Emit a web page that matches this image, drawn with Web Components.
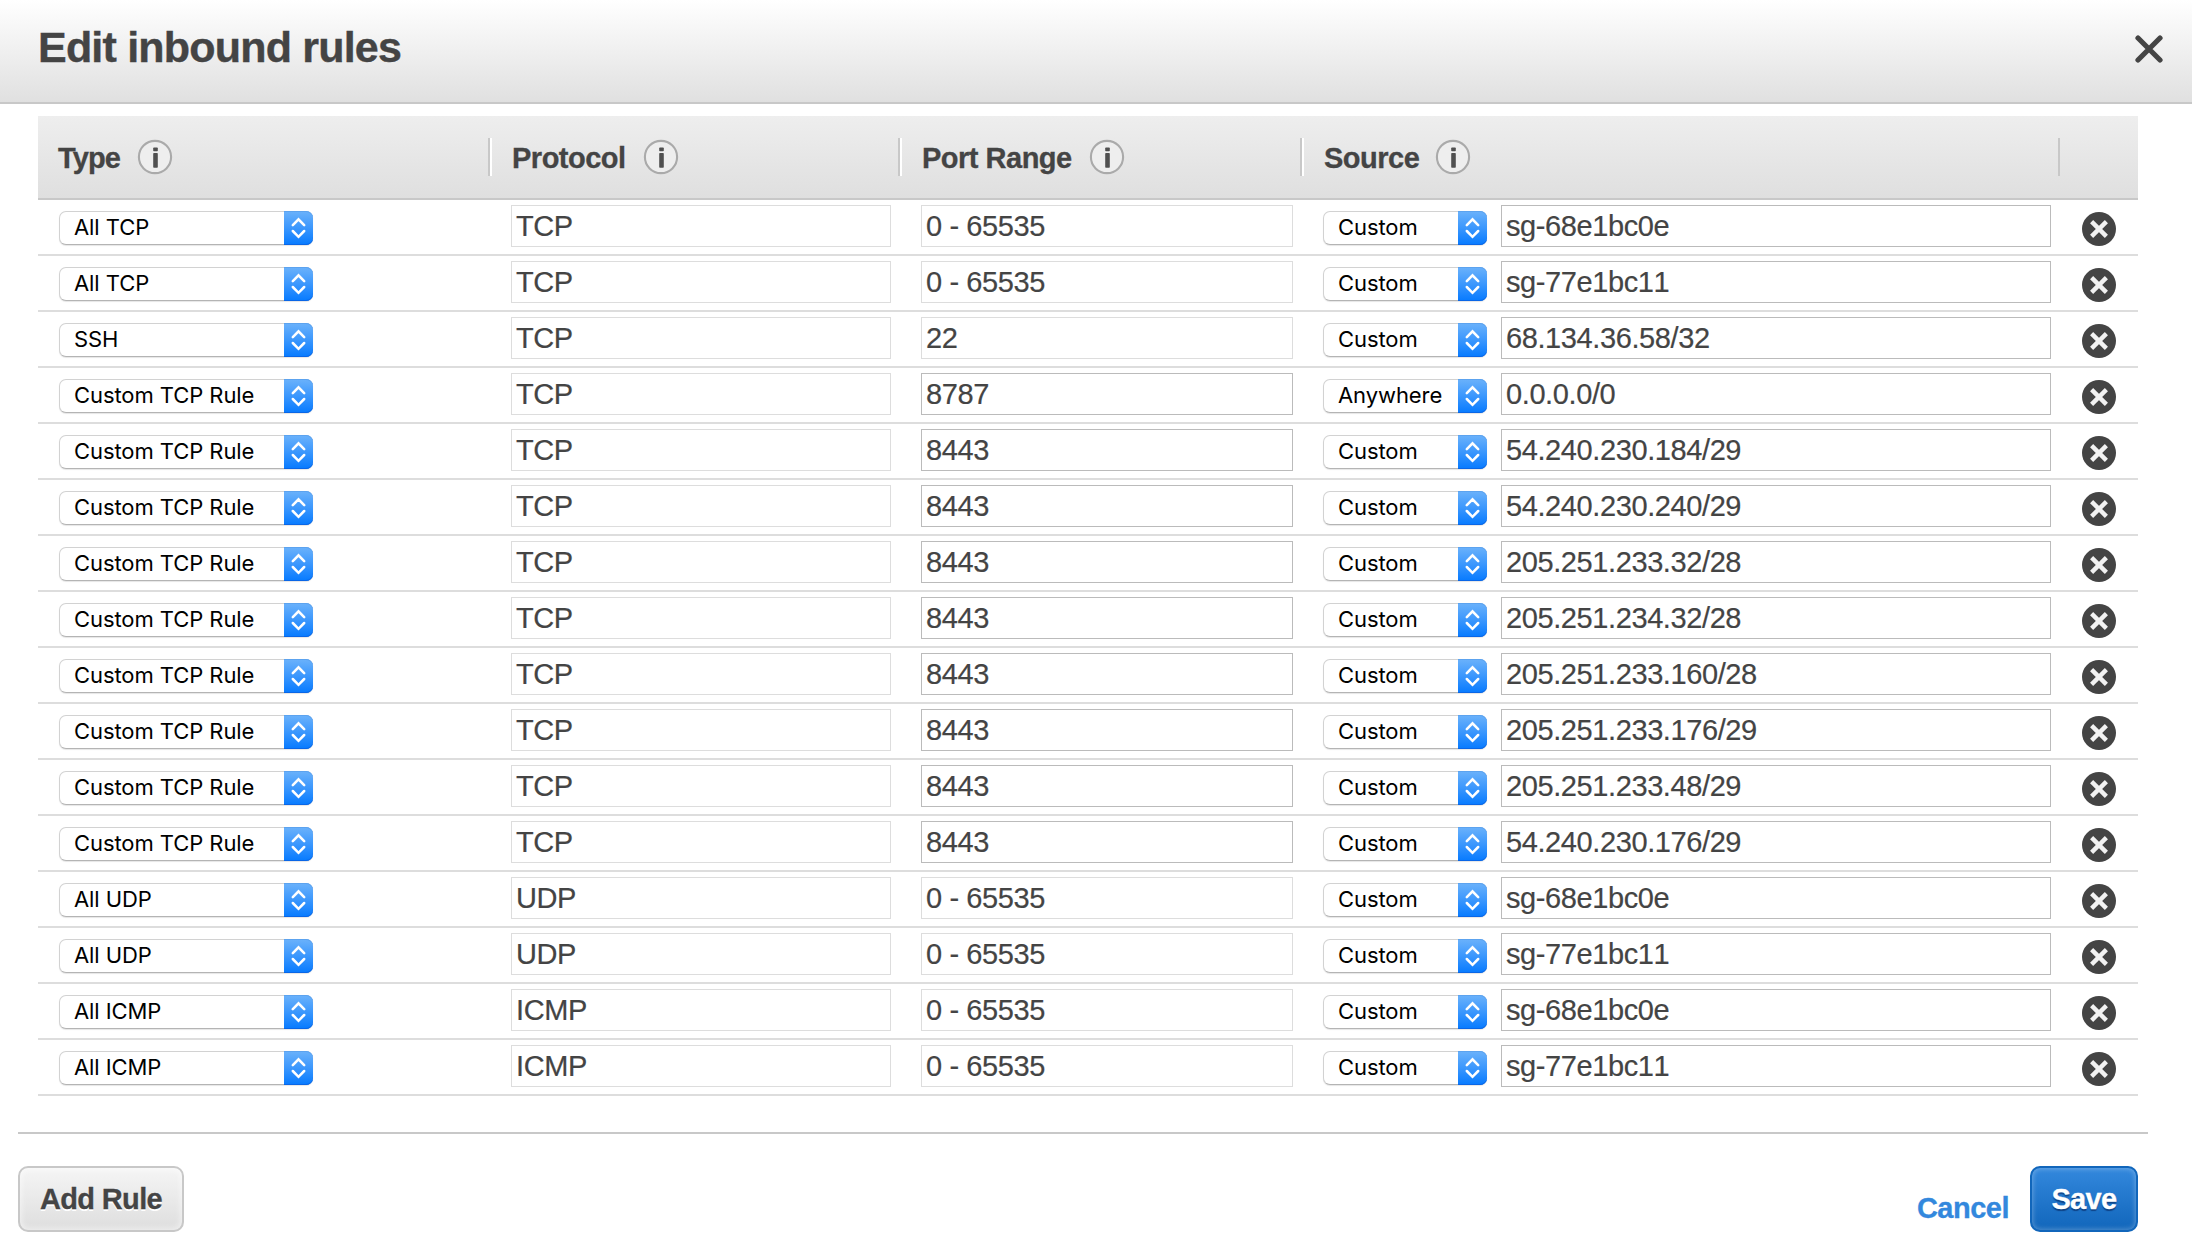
<!DOCTYPE html>
<html lang="en">
<head>
<meta charset="utf-8">
<title>Edit inbound rules</title>
<style>
  html, body { margin: 0; background: #fff; }
  body { font-family: "Liberation Sans", Arial, sans-serif; color: #444; }
</style>
</head>
<body>
<rules-dialog heading="Edit inbound rules"></rules-dialog>

<script>
const define = (name, css, html) => customElements.define(name, class extends HTMLElement {
  constructor() {
    super();
    this.attachShadow({ mode: 'open' }).innerHTML =
      `<style>*{box-sizing:border-box}${css}</style>` + (typeof html === 'function' ? html(this) : html);
  }
});

define('info-icon', `
  :host { display: block; width: 36px; height: 36px; }
  svg { display: block; }`,
  `<svg width="36" height="36" viewBox="0 0 36 36">
    <circle cx="18" cy="18" r="16.1" fill="#eee" stroke="#aaa" stroke-width="2.1"/>
    <rect x="16.2" y="8.4" width="4.6" height="3.8" rx=".8" fill="#505050"/>
    <rect x="16.2" y="14" width="4.6" height="14.8" rx=".8" fill="#505050"/>
  </svg>`);

define('remove-button', `
  :host { display: block; width: 34px; height: 34px; }
  svg { display: block; }`,
  `<svg width="34" height="34" viewBox="0 0 34 34">
    <circle cx="17" cy="17" r="17" fill="#444"/>
    <path d="M9.6 9.6 24.4 24.4M24.4 9.6 9.6 24.4" stroke="#f2f2f2" stroke-width="4.4"/>
  </svg>`);

define('close-button', `
  :host { display: block; width: 28px; height: 28px; }
  svg { display: block; }`,
  `<svg width="28" height="28" viewBox="0 0 28 28">
    <path d="M3 3 25 25M25 3 3 25" stroke="#444" stroke-width="5.2" stroke-linecap="round"/>
  </svg>`);

define('pop-select', `
  :host { display: flex; height: 34px; border-radius: 7px; background: #fff;
    border: 1px solid #d2d2d2; border-bottom-color: #b4b4b4; box-shadow: 0 1px 1px rgba(0,0,0,.1);
    box-sizing: border-box; color: #000; font: 22px/32px Inter, Roboto, sans-serif; letter-spacing: -.08px; }
  span { flex: 1; padding-left: 14px; white-space: nowrap; margin-top: -1px; }
  .cap { width: 29px; margin: -1px; height: 34px; background: linear-gradient(#6bb2fb, #3b97fd 50%, #067aff);
    box-shadow: inset 0 -1px #0a66e6, inset 0 1px #5ca3ef; border-radius: 0 7px 7px 0; }
  svg { display: block; }`,
  `<span><slot></slot></span><div class="cap"><svg width="29" height="34" viewBox="0 0 29 34">
    <path d="M8.8 14.2 14.5 8.4 20.2 14.2M8.8 20 14.5 25.8 20.2 20" fill="none" stroke="#fff" stroke-width="2.5" stroke-linecap="round" stroke-linejoin="miter"/>
  </svg></div>`);

define('text-field', `
  :host { display: block; box-sizing: border-box; height: 42px; padding: 4px 4px; border: 1px solid #ddd;
    font-size: 29px; line-height: 32px; letter-spacing: -.4px; font-kerning: none; white-space: nowrap; background: #fff;
    -webkit-text-stroke: .2px #444; }
  :host([editable]) { border-color: #bbb; }`,
  `<slot></slot>`);

define('column-head', `
  :host { display: flex; align-items: center; height: 82px; padding-left: var(--inset, 22px); box-sizing: border-box;
    font-weight: bold; font-size: 29px; line-height: 32px; letter-spacing: -.5px; -webkit-text-stroke: .3px #444; }
  .label { margin-top: 2px; white-space: nowrap; width: var(--label); }
  .rule { margin-left: auto; width: 2px; height: 38px; background: #c8c8c8; }
  :host([lit]) .rule { box-shadow: 2px 0 #fff; }`,
  `<span class="label"><slot></slot></span><info-icon></info-icon><div class="rule"></div>`);

define('rule-row', `
  :host { display: grid; grid-template-columns: var(--cols); height: 56px; box-sizing: border-box; border-bottom: 2px solid #ddd; }
  div { padding: 5px 0 0 21px; display: flex; align-items: flex-start; }
  pop-select { margin-top: 6px; }
  .type { width: 254px; }
  .proto { width: 380px; }
  .port { width: 372px; }
  .mode { width: 164px; }
  .src { width: 550px; margin-left: 14px; }
  .del { padding: 12px 0 0 22px; }`,
  el => {
    const a = n => el.getAttribute(n);
    return `<div><pop-select class="type">${a('type')}</pop-select></div>
      <div><text-field class="proto">${a('protocol')}</text-field></div>
      <div><text-field class="port" ${a('type') === 'Custom TCP Rule' ? 'editable' : ''}>${a('port')}</text-field></div>
      <div><pop-select class="mode">${a('mode')}</pop-select><text-field class="src" editable>${a('source')}</text-field></div>
      <div class="del"><remove-button></remove-button></div>`;
  });

const C = 'Custom TCP Rule', R = '0 - 65535';
const rules = [
  ['All TCP', 'TCP', R, 'Custom', 'sg-68e1bc0e'],
  ['All TCP', 'TCP', R, 'Custom', 'sg-77e1bc11'],
  ['SSH', 'TCP', '22', 'Custom', '68.134.36.58/32'],
  [C, 'TCP', '8787', 'Anywhere', '0.0.0.0/0'],
  [C, 'TCP', '8443', 'Custom', '54.240.230.184/29'],
  [C, 'TCP', '8443', 'Custom', '54.240.230.240/29'],
  [C, 'TCP', '8443', 'Custom', '205.251.233.32/28'],
  [C, 'TCP', '8443', 'Custom', '205.251.234.32/28'],
  [C, 'TCP', '8443', 'Custom', '205.251.233.160/28'],
  [C, 'TCP', '8443', 'Custom', '205.251.233.176/29'],
  [C, 'TCP', '8443', 'Custom', '205.251.233.48/29'],
  [C, 'TCP', '8443', 'Custom', '54.240.230.176/29'],
  ['All UDP', 'UDP', R, 'Custom', 'sg-68e1bc0e'],
  ['All UDP', 'UDP', R, 'Custom', 'sg-77e1bc11'],
  ['All ICMP', 'ICMP', R, 'Custom', 'sg-68e1bc0e'],
  ['All ICMP', 'ICMP', R, 'Custom', 'sg-77e1bc11'],
];

define('rules-table', `
  :host { display: block; --cols: 452px 410px 402px 758px 78px; }
  .head { display: grid; grid-template-columns: var(--cols); height: 84px; border-bottom: 2px solid #c8c8c8;
    background: linear-gradient(#eee, #dfdfdf); }`,
  `<div class="head"><column-head lit style="--inset:20px;--label:79px;letter-spacing:-.9px">Type</column-head><column-head lit style="--label:131px">Protocol</column-head><column-head lit style="--label:167px">Port Range</column-head><column-head style="--label:111px">Source</column-head></div>` +
  rules.map(r => `<rule-row type="${r[0]}" protocol="${r[1]}" port="${r[2]}" mode="${r[3]}" source="${r[4]}"></rule-row>`).join(''));

define('push-button', `
  :host { display: block; box-sizing: border-box; height: 66px; padding-top: 15px; text-align: center; border: 2px solid #c8c8c8;
    border-radius: 10px; font-weight: bold; font-size: 29px; line-height: 32px; letter-spacing: -.65px; white-space: nowrap;
    -webkit-text-stroke: .3px currentColor;
    background: linear-gradient(#f5f5f5, #dedede); box-shadow: inset 0 0 6px 1px rgba(255,255,255,.6); text-shadow: 0 2px #fff; }
  :host([primary]) { color: #fff; border-color: #1166bb; background: linear-gradient(#3388dd, #1166bb);
    box-shadow: inset 0 0 5px 1px rgba(255,255,255,.28); text-shadow: 0 2px 1px rgba(0,20,70,.5); }`,
  `<slot></slot>`);

define('rules-dialog', `
  :host { display: block; width: 2192px; height: 1256px; overflow: hidden; background: #fff; }
  header { display: flex; justify-content: space-between; height: 104px; padding: 23px 29px 0 38px;
    border-bottom: 2px solid #c8c8c8; background: linear-gradient(#fff, #e0e0e0); }
  h1 { margin: 0; font-size: 43px; line-height: 48px; letter-spacing: -.8px; -webkit-text-stroke: .4px #444; }
  close-button { margin-top: 12px; }
  rules-table { margin: 12px 54px 0 38px; }
  footer { display: flex; margin: 36px 44px 0 18px; border-top: 2px solid #c8c8c8; padding: 32px 10px 0 0; }
  .add { width: 166px; }
  .cancel { margin: 26px 21px 0 auto; color: #3388dd; font-weight: bold; font-size: 29px; line-height: 32px; letter-spacing: -.5px;
    -webkit-text-stroke: .3px currentColor; }
  .save { width: 108px; }`,
  el => `<header><h1>${el.getAttribute('heading')}</h1><close-button></close-button></header>
    <rules-table></rules-table>
    <footer><push-button class="add">Add Rule</push-button><span class="cancel">Cancel</span><push-button class="save" primary>Save</push-button></footer>`);
</script>
</body>
</html>
